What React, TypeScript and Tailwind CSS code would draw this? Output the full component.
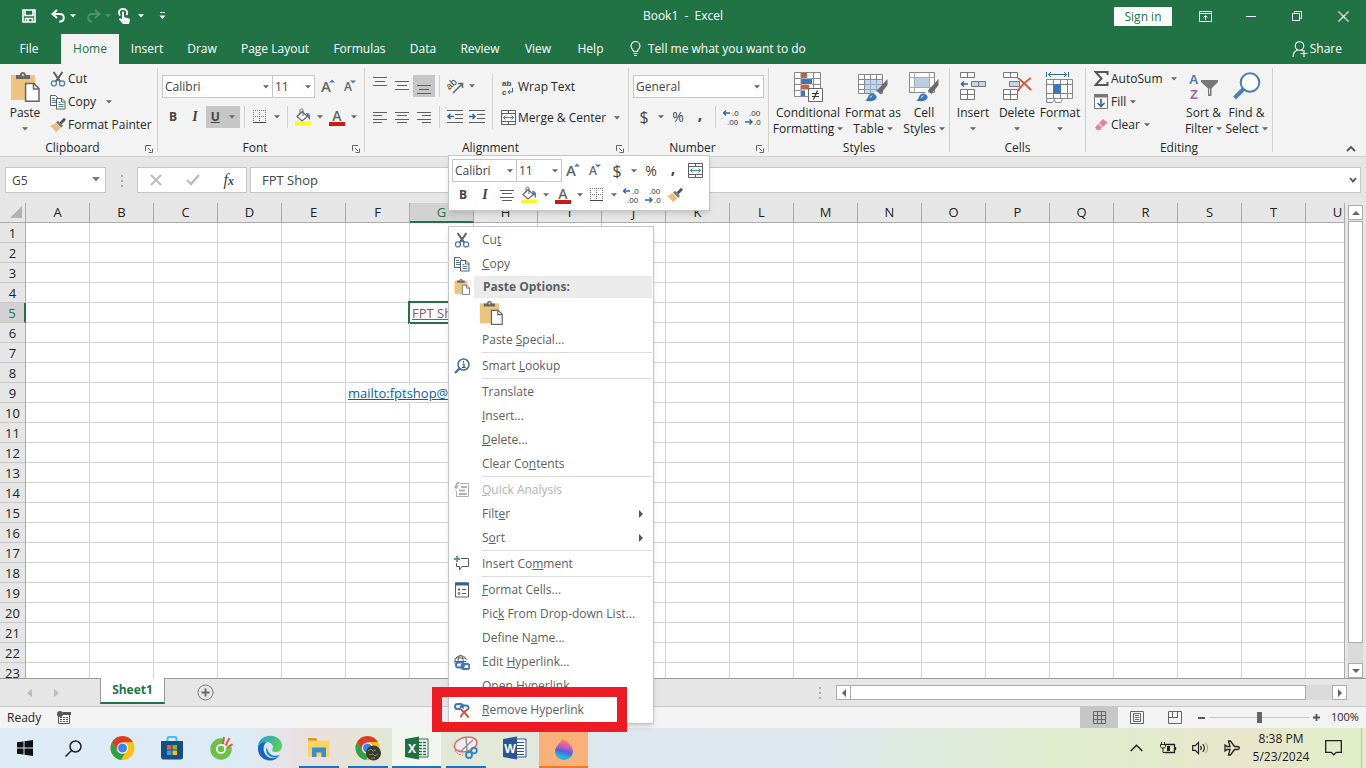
import React, { useState } from 'react';

type IconProps = { className?: string };

const tabs = [
  { name: 'File', width: 'w-[61px]' },
  { name: 'Home', width: 'w-[58px]' },
  { name: 'Insert', width: 'w-[56px]' },
  { name: 'Draw', width: 'w-[54px]' },
  { name: 'Page Layout', width: 'w-[92px]' },
  { name: 'Formulas', width: 'w-[77px]' },
  { name: 'Data', width: 'w-[50px]' },
  { name: 'Review', width: 'w-[64px]' },
  { name: 'View', width: 'w-[52px]' },
  { name: 'Help', width: 'w-[53px]' },
];

const columns = 'ABCDEFGHIJKLMNOPQRSTU'.split('');
const rows = Array.from({ length: 23 }, (_, i) => i + 1);

/* ---------- small shared icons ---------- */

const Caret = ({ className = 'text-[#666]' }: IconProps) => (
  <svg width="6" height="4" viewBox="0 0 6 4" className={`shrink-0 ${className}`} aria-hidden="true">
    <path d="M0 0.3h6L3 3.6z" fill="currentColor" />
  </svg>
);

const CaretButton = ({ label }: { label: string }) => (
  <button aria-label={label} className="flex h-[22px] w-3 shrink-0 items-center justify-center">
    <Caret />
  </button>
);

const Scissors = () => (
  <svg width="16" height="16" viewBox="0 0 16 16" fill="none" className="shrink-0" aria-hidden="true">
    <path d="M3.6 1l6.6 9.6M12.4 1L5.8 10.6" stroke="#5e5e5e" strokeWidth="2" />
    <circle cx="3.9" cy="12.4" r="2.5" stroke="#4a7fb5" strokeWidth="1.3" />
    <circle cx="12.1" cy="12.4" r="2.5" stroke="#4a7fb5" strokeWidth="1.3" />
  </svg>
);

const CopyIcon = () => (
  <svg width="16" height="16" viewBox="0 0 16 16" fill="none" className="shrink-0" aria-hidden="true">
    <path d="M.5 1.5h5l2 2v8h-7z" fill="#fff" stroke="#5e5e5e" />
    <path d="M2 4.5h3M2 6.5h4M2 8.5h4" stroke="#4a7fb5" />
    <path d="M6.5 4.5h5.5l3 3v7.500h-8.500z" fill="#fff" stroke="#5e5e5e" />
    <path d="M11.500 4.500v3.500h3.500" stroke="#5e5e5e" />
    <path d="M8.500 8.500h2M8.500 10.500h5M8.500 12.500h5" stroke="#4a7fb5" />
  </svg>
);

const PainterIcon = () => (
  <svg width="16" height="16" viewBox="0 0 16 16" className="shrink-0" aria-hidden="true">
    <path d="M0 9.500L5.500 6l5 5L6 15.500c-1-2-3-4.500-6-6z" fill="#e8bf7e" />
    <path d="M6 5.500L8 3.700l5 5-1.800 2z" fill="#777" />
    <path d="M9.600 5.200L14 .8l2 2L11.700 7.200z" fill="#555" />
  </svg>
);

const PasteIcon = ({ className = 'h-[30px] w-[30px]' }: IconProps) => (
  <svg viewBox="0 0 30 30" fill="none" className={`shrink-0 ${className}`} aria-hidden="true">
    <path d="M1 3h24v25H1z" fill="#ecc47f" />
    <path d="M6 7V3h4c0-4 6-4 6 0h4v4z" fill="#666" />
    <circle cx="13" cy="3" r="1.300" fill="#ecc47f" />
    <path d="M15.600 11.600h8.400l5 5v12.600H15.600z" fill="#fff" stroke="#666" strokeWidth="1.500" />
    <path d="M23.500 11.600v5.500H29" stroke="#666" strokeWidth="1.500" />
  </svg>
);

const GrowFont = () => (
  <span className="flex text-[15px] font-semibold leading-none text-[#666]">
    A
    <svg width="6" height="4" viewBox="0 0 6 4" className="-ml-0.5" aria-hidden="true"><path d="M0 3.500h6L3 .5z" fill="#4a7fb5" /></svg>
  </span>
);

const ShrinkFont = () => (
  <span className="flex text-xs font-semibold leading-[14px] text-[#666]">
    A
    <svg width="6" height="4" viewBox="0 0 6 4" className="-ml-0.5" aria-hidden="true"><path d="M0 .5h6L3 3.500z" fill="#4a7fb5" /></svg>
  </span>
);

const BordersIcon = () => (
  <svg width="14" height="14" viewBox="0 0 14 14" fill="none" aria-hidden="true">
    <path d="M0 .5h14M0 6.500h14M.5 0v13M6.500 0v13M12.500 0v13" stroke="#777" strokeDasharray="1 1" />
    <path d="M0 12.500h13" stroke="#444" />
  </svg>
);

const BucketIcon = () => (
  <svg width="18" height="18" viewBox="0 0 18 18" fill="none" aria-hidden="true">
    <path d="M8 3.500l5.500 5L8 13 3 8.500z" fill="#fff" stroke="#666" strokeWidth="1.200" />
    <path d="M6 6.500V2.500c0-2 3-2 3 0V8" stroke="#666" />
    <path d="M12 5c4-.5 5 3 3.500 7.500-.5-2-1-3-2.500-4z" fill="#4a7fb5" />
    <path d="M1 13.500h16v4H1z" fill="#fcf62a" />
  </svg>
);

const FontColorIcon = () => (
  <span className="flex w-4 flex-col items-center border-b-4 border-[#cf1717] text-sm font-semibold leading-[13px] text-[#666]">A</span>
);

const linePaths = {
  top: 'M0 2.500h14M2 6.500h10M0 10.500h14',
  left: 'M0 2.500h14M0 5.500h9M0 9.500h14M0 12.500h9',
  center: 'M0 2.500h14M2 5.500h10M0 9.500h14M2 12.500h10',
  right: 'M0 2.500h14M5 5.500h9M0 9.500h14M5 12.500h9',
};

const Lines = ({ kind, className = '' }: { kind: keyof typeof linePaths; className?: string }) => (
  <svg width="14" height="14" viewBox="0 0 14 14" className={className} aria-hidden="true">
    <path d={linePaths[kind]} stroke="#5e5e5e" />
  </svg>
);

const IndentIcon = ({ inc }: { inc?: boolean }) => (
  <svg width="16" height="14" viewBox="0 0 16 14" fill="none" aria-hidden="true">
    <path d="M0 .5h16M8 4.500h8M8 8.500h8M0 12.500h16" stroke="#5e5e5e" />
    <path d={inc ? 'M0 6.500h6M3.500 4l2.500 2.500L3.500 9' : 'M7 6.500H1M3.500 4L1 6.500 3.500 9'} stroke="#34679f" strokeWidth="1.600" />
  </svg>
);

const MergeIcon = () => (
  <svg width="15" height="15" viewBox="0 0 15 15" fill="none" aria-hidden="true">
    <path d="M.5.5h14v14H.5zM.5 3.500h14M.5 11.500h14M7.500.5v3M7.500 11.500v3" stroke="#5e5e5e" fill="#fff" />
    <path d="M2.500 7.500h10M4.500 5.500l-2 2 2 2M10.500 5.500l2 2-2 2" stroke="#4a7fb5" />
  </svg>
);

const DecimalIcon = ({ inc }: { inc?: boolean }) => (
  <svg width="16" height="19" viewBox="0 0 16 19" fill="none" aria-hidden="true">
    <g fill="#333" fontSize="8" fontFamily="Liberation Sans, sans-serif">
      <text x={inc ? 9 : 4} y="8">{inc ? '.0' : '.00'}</text>
      <text x={inc ? 4 : 9} y="17">{inc ? '.00' : '.0'}</text>
    </g>
    <path d={inc ? 'M7 5H1M3 2.500L.5 5 3 7.500' : 'M0 14h6.500M4.500 11.500L7 14l-2.500 2.500'} stroke="#34679f" strokeWidth="1.400" />
  </svg>
);

/* ---------- large ribbon icons ---------- */

const ConditionalIcon = () => (
  <svg width="30" height="30" viewBox="0 0 30 30" fill="none" aria-hidden="true">
    <path d="M1.500.5h26v24h-26z" fill="#fff" />
    <path d="M8 1h6v5H8zM8 12.500h8v5H8z" fill="#c7603f" />
    <path d="M8 6.500h11v5.500H8zM8 18.500h4v6H8z" fill="#3f76b5" />
    <path d="M1.500.5h26v24h-26zM1.500 6.500h6M19 6.500h8.500M1.500 12.500h6M19 12.500h8.500M1.500 18.500h6M8 .5v24M20.500.5v24" stroke="#888" />
    <path d="M15.500 16.500h14v13h-14z" fill="#fff" stroke="#666" />
    <path d="M19 21.500h7M19 24.500h7M24.500 18.500l-4 9" stroke="#333" strokeWidth="1.200" />
  </svg>
);

const Brush = () => (
  <>
    <path d="M29.500 7v6l-7 9-4-3z" fill="#6b6b6b" />
    <path d="M7 28.500c3-1 2.500-4 4.500-6 3-2.500 8 .5 7 3.500-1.500 3.500-7 4-11.500 2.500z" fill="#3f76b5" />
    <path d="M17.500 19l4.500 3-2 2.500-4-3z" fill="#fff" />
    <path d="M12 26l2-2.500" stroke="#fff" />
  </>
);

const TableStyleIcon = () => (
  <svg width="30" height="30" viewBox="0 0 30 30" fill="none" aria-hidden="true">
    <path d="M.5 2.500h24v19H.5z" fill="#fff" />
    <path d="M6.500 7.500h18v14h-18z" fill="#c5d6e8" />
    <path d="M6.500 12.500h18M6.500 17.500h18M12.500 7.500v14M18.500 7.500v14" stroke="#8fa9c4" />
    <path d="M.5 2.500h24v19H.5zM.5 7.500h24M.5 12.500h6M.5 17.500h6M6.500 2.500v19M12.500 2.500v5M18.500 2.500v5" stroke="#888" />
    <Brush />
  </svg>
);

const CellStyleIcon = () => (
  <svg width="30" height="30" viewBox="0 0 30 30" fill="none" aria-hidden="true">
    <path d="M.5.5h25v20H.5z" fill="#fff" stroke="#888" />
    <path d="M.5 5.500h25M.5 15.500h25M5.500.5v20M20.500.5v20" stroke="#aaa" />
    <path d="M6 6h14v9H6z" fill="#b9cde3" />
    <Brush />
  </svg>
);

const InsertCellsIcon = () => (
  <svg width="28" height="30" viewBox="0 0 28 30" fill="none" aria-hidden="true">
    <path d="M1.500.5h14v5h-14zM8.500.5v5M1.500 17.500h14v10h-14zM8.500 17.500v10M1.500 22.500h14" fill="#fff" stroke="#777" />
    <path d="M12.500 9.500h14v5h-14zM19.500 9.500v5" fill="#c5d6e8" stroke="#777" />
    <path d="M9 12H2.500M5 9.500L2.500 12 5 14.500" stroke="#34679f" strokeWidth="1.600" />
  </svg>
);

const DeleteCellsIcon = () => (
  <svg width="30" height="30" viewBox="0 0 30 30" fill="none" aria-hidden="true">
    <path d="M1.500.5h14v5h-14zM8.500.5v5M1.500 17.500h14v10h-14zM8.500 17.500v10M1.500 22.500h14" fill="#fff" stroke="#777" />
    <path d="M7.500 9.500h10v5h-10z" fill="#c5d6e8" stroke="#777" />
    <path d="M16 6c4 3 8 7 13 12M29 6c-5 3-10 8-13 13" stroke="#cf5b3f" strokeWidth="2" />
  </svg>
);

const FormatCellsIcon = () => (
  <svg width="30" height="32" viewBox="0 0 30 32" fill="none" aria-hidden="true">
    <path d="M1.500 0v5M23.500 0v5M3 2.500h19M6 0L3.500 2.500 6 5M19 0l2.500 2.500L19 5" stroke="#34679f" />
    <path d="M1.500 7.500h26v19h-26zM1.500 12.500h26M1.500 21.500h26M8.500 7.500v19M15.500 7.500v19M22.500 7.500v19" fill="#fff" stroke="#888" />
    <path d="M8 12h8v10H8z" fill="#3f76b5" />
    <path d="M1.500 27v3.500h6l2-3 1 3h5l2-3" fill="#fff" stroke="#888" />
  </svg>
);

const SortIcon = () => (
  <svg width="30" height="31" viewBox="0 0 30 31" aria-hidden="true">
    <g fontSize="13" fontWeight="700" fontFamily="Liberation Sans, sans-serif">
      <text x="0" y="12" fill="#4a7fb5">A</text>
      <text x="1" y="27" fill="#9b63b5">Z</text>
    </g>
    <path d="M12 8h17v2l-6.500 6.500V24h-3.500v-7.500L12 10z" fill="#777" />
    <path d="M20.500 16.500v6" stroke="#ddd" />
  </svg>
);

const FindIcon = () => (
  <svg width="30" height="30" viewBox="0 0 30 30" fill="none" aria-hidden="true">
    <circle cx="18" cy="10.500" r="9.300" fill="#fff" stroke="#4a7fb5" strokeWidth="2" />
    <path d="M11.500 17L2.500 26" stroke="#4a7fb5" strokeWidth="4" />
  </svg>
);

/* ---------- ribbon building blocks ---------- */

type GroupProps = { title: string; width: string; launcher?: boolean; children: React.ReactNode };

const Group = ({ title, width, launcher, children }: GroupProps) => (
  <>
    <section aria-label={title} className={`flex h-full shrink-0 flex-col justify-between ${width}`}>
      <div className="flex">{children}</div>
      <div className="flex h-4 items-center">
        <span className="flex-1 text-center leading-4">{title}</span>
        {launcher && (
          <button aria-label={`${title} settings`} className="flex w-3 items-center justify-start pt-0.5">
            <svg width="8" height="8" viewBox="0 0 8 8" fill="none">
              <path d="M.5 6V.5H6M3 3l3 3M7.500 3.500v4h-4" stroke="#666" />
            </svg>
          </button>
        )}
      </div>
    </section>
    <div className="my-1 w-px shrink-0 bg-[#d2d0ce]"></div>
  </>
);

const Tool = ({ label, className = '', children }: { label: string; className?: string; children: React.ReactNode }) => (
  <button aria-label={label} className={`flex h-[22px] w-[22px] shrink-0 items-center justify-center text-[#444] ${className}`}>
    {children}
  </button>
);

const Divider = ({ className = 'mx-1' }: IconProps) => <span className={`h-[22px] w-px shrink-0 bg-[#d2d0ce] ${className}`}></span>;

type PickerProps = { label: string; value: string; className: string };

const Picker = ({ label, value, className }: PickerProps) => (
  <label className={`relative block h-[23px] shrink-0 ${className}`}>
    <select aria-label={label} className="h-full w-full appearance-none border border-[#c6c6c6] bg-white pl-0.5 text-xs text-[#444] outline-none">
      <option>{value}</option>
    </select>
    <Caret className="pointer-events-none absolute right-1 top-[10px] text-[#666]" />
  </label>
);

type BigProps = { lines: string[]; width: string; icon: React.ReactNode };

const BigButton = ({ lines, width, icon }: BigProps) => (
  <button className={`flex shrink-0 flex-col items-center pt-2 ${width}`}>
    <span className="flex h-8 items-start justify-center">{icon}</span>
    <span className="mt-px h-4 whitespace-nowrap leading-4">{lines[0]}</span>
    <span className="flex h-4 items-center gap-[3px] whitespace-nowrap leading-4">
      {lines[1]}
      <Caret />
    </span>
  </button>
);

type SmallProps = { icon: React.ReactNode; text: string; arrow?: string };

const SmallButton = ({ icon, text, arrow }: SmallProps) => (
  <button className="flex h-[23px] items-center whitespace-nowrap">
    <span className="mr-0.5 flex w-4 justify-center">{icon}</span>
    {text}
    {arrow && <Caret className={`text-[#666] ${arrow}`} />}
  </button>
);

/* ---------- header ---------- */

const TitleBar = () => (
  <div className="flex h-[34px] items-start text-white">
    <div className="flex h-8 flex-1 items-center">
      <button aria-label="Save" className="ml-[22px]">
        <svg width="14" height="14" viewBox="0 0 14 14" fill="none"><path d="M1 1h12v12H1zM3 1v5.500h8V1M3.500 13V9.500h7V13M6 10v3" stroke="#fff" strokeWidth="1.600" /></svg>
      </button>
      <button aria-label="Undo" className="ml-[15px]">
        <svg width="15" height="14" viewBox="0 0 15 14" fill="none"><path d="M6 1L1.500 5 6 9M2 5h7c5 0 5 7.500 0 7.500H8" stroke="#fff" strokeWidth="2" /></svg>
      </button>
      <Caret className="ml-1 text-white" />
      <button aria-label="Redo" className="ml-2.5">
        <svg width="15" height="14" viewBox="0 0 15 14" fill="none"><path d="M9 1l4.500 4L9 9M13 5H6C1 5 1 12.500 6 12.500" stroke="#4f9270" strokeWidth="2" /></svg>
      </button>
      <Caret className="ml-1 text-[#4f9270]" />
      <button aria-label="Touch mode" className="ml-[7px]">
        <svg width="13" height="16" viewBox="0 0 13 16" fill="none">
          <path d="M2 7.500C-.5 3 2 1 5 1s5.500 2.500 3.500 6" stroke="#fff" strokeWidth="1.800" />
          <path d="M4 4.500c0-1.200 2-1.200 2 0V9l5 1.500c1 .3 1 1 .8 2L11 16H5L1.200 11.500c-.5-1 .8-1.500 1.500-1L4 11.500z" fill="#fff" />
        </svg>
      </button>
      <Caret className="ml-[7px] text-white" />
      <button aria-label="Customize toolbar" className="ml-[15px]">
        <svg width="7" height="8" viewBox="0 0 7 8"><path d="M1 .5h5" stroke="#fff" /><path d="M.5 3.500h6l-3 3.500z" fill="#fff" /></svg>
      </button>
    </div>
    <h1 className="flex h-8 items-center whitespace-pre">Book1  -  Excel</h1>
    <div className="flex h-8 flex-1 items-center justify-end">
      <button className="mr-[10px] h-[19px] w-[58px] bg-white leading-[19px] text-[#217346]">Sign in</button>
      <button aria-label="Ribbon display options" className="flex w-[46px] justify-center">
        <svg width="13" height="11" viewBox="0 0 13 11" fill="none"><path d="M.5.5h12v10H.5zM.5 2.500h12M6.500 9V4.500M4.500 6.500l2-2 2 2" stroke="#fff" /></svg>
      </button>
      <button aria-label="Minimize" className="flex w-[46px] justify-center"><span className="h-px w-[10px] bg-white"></span></button>
      <button aria-label="Restore" className="flex w-[46px] justify-center">
        <svg width="10" height="10" viewBox="0 0 10 10" fill="none"><path d="M.5 2.500h7v7h-7zM2.500 2V.5h7v7H8" stroke="#fff" /></svg>
      </button>
      <button aria-label="Close" className="flex w-[46px] justify-center">
        <svg width="11" height="11" viewBox="0 0 11 11" fill="none"><path d="M.5.5l10 10M10.500.5l-10 10" stroke="#fff" strokeWidth="1.100" /></svg>
      </button>
    </div>
  </div>
);

const TabBar = () => (
  <nav className="flex h-[30px] items-stretch text-white">
    {tabs.map((tab) => (
      <button
        key={tab.name}
        className={`shrink-0 whitespace-nowrap ${tab.width} ${tab.name === 'Home' ? 'bg-[#f3f3f3] text-[#217346]' : ''} ${tab.name === 'File' ? 'pr-[3px]' : ''}`}
      >
        {tab.name}
      </button>
    ))}
    <button className="ml-3 flex items-center gap-1.5 whitespace-nowrap">
      <svg width="13" height="16" viewBox="0 0 13 16" fill="none">
        <path d="M4.500 10.500C4.500 8.500 2 8 2 5a4.500 4.500 0 019 0c0 3-2.500 3.500-2.500 5.500zM4.500 12.500h4M5 14.500h3" stroke="#fff" strokeWidth="1.100" />
      </svg>
      Tell me what you want to do
    </button>
    <button className="ml-auto mr-6 flex items-center gap-0.5">
      <svg width="16" height="16" viewBox="0 0 16 16" fill="none">
        <circle cx="7.500" cy="5" r="4.300" stroke="#fff" strokeWidth="1.100" />
        <path d="M1 16c0-4 2-6 4.500-7M9.500 9l1.500 1M8.500 12.500h7M12 9v7" stroke="#fff" strokeWidth="1.100" />
      </svg>
      Share
    </button>
  </nav>
);

const Ribbon = () => (
  <div className="flex h-[93px] border-b border-[#d2d0ce] bg-[#f3f3f3] text-[#262626]">
    <Group title="Clipboard" width="w-[157px]" launcher>
      <BigButton lines={['Paste', '']} width="w-[50px]" icon={<PasteIcon />} />
      <div className="flex flex-col items-start pt-[3px]">
        <SmallButton icon={<Scissors />} text="Cut" />
        <SmallButton icon={<CopyIcon />} text="Copy" arrow="ml-2.5" />
        <SmallButton icon={<PainterIcon />} text="Format Painter" />
      </div>
    </Group>

    <Group title="Font" width="w-[206px]" launcher>
      <div className="pl-1 pt-[11px]">
        <div className="flex items-center">
          <Picker label="Font name" value="Calibri" className="w-[111px]" />
          <Picker label="Font size" value="11" className="-ml-px w-[43px]" />
          <Tool label="Increase font size" className="ml-0.5"><GrowFont /></Tool>
          <Tool label="Decrease font size"><ShrinkFont /></Tool>
        </div>
        <div className="mt-2 flex items-center">
          <Tool label="Bold"><b>B</b></Tool>
          <Tool label="Italic"><i className="font-['Liberation_Serif'] text-sm font-bold">I</i></Tool>
          <button aria-label="Underline" className="flex h-[22px] w-[34px] items-center justify-around bg-[#c6c6c6] font-bold text-[#444] underline">
            U
            <Caret />
          </button>
          <Divider />
          <Tool label="Borders"><BordersIcon /></Tool>
          <CaretButton label="Border options" />
          <Divider />
          <Tool label="Fill color"><BucketIcon /></Tool>
          <CaretButton label="Fill color options" />
          <Tool label="Font color"><FontColorIcon /></Tool>
          <CaretButton label="Font color options" />
        </div>
      </div>
    </Group>

    <Group title="Alignment" width="w-[263px]" launcher>
      <div className="w-[127px] pl-1 pt-[11px]">
        <div className="flex items-center">
          <Tool label="Top align" className="items-start"><Lines kind="top" /></Tool>
          <Tool label="Middle align"><Lines kind="top" /></Tool>
          <Tool label="Bottom align" className="items-end bg-[#c6c6c6]"><Lines kind="top" /></Tool>
          <Divider />
          <Tool label="Orientation">
            <svg width="18" height="18" viewBox="0 0 18 18" fill="none" className="overflow-visible">
              <text x="1" y="11" fontSize="10" fill="#444" fontFamily="Liberation Sans, sans-serif" transform="rotate(-42 5 9)">ab</text>
              <path d="M7 16l9-9M12 6.500h4.500V11" stroke="#666" strokeWidth="1.500" />
            </svg>
          </Tool>
          <CaretButton label="Orientation options" />
        </div>
        <div className="mt-[9px] flex items-center">
          <Tool label="Align left"><Lines kind="left" /></Tool>
          <Tool label="Center"><Lines kind="center" /></Tool>
          <Tool label="Align right"><Lines kind="right" /></Tool>
          <Divider />
          <Tool label="Decrease indent"><IndentIcon /></Tool>
          <Tool label="Increase indent"><IndentIcon inc /></Tool>
        </div>
      </div>
      <div className="mt-[9px] w-px bg-[#d2d0ce]"></div>
      <div className="flex flex-col items-start pl-[7px] pt-[11px]">
        <SmallButton
          icon={
            <svg width="14" height="20" viewBox="0 0 14 20" fill="none">
              <g fill="#444" fontSize="8" fontWeight="700" fontFamily="Liberation Sans, sans-serif"><text x="1" y="9">ab</text><text x="1" y="18">c</text></g>
              <path d="M11.500 11v4H7M9 13l-2 2 2 2" stroke="#34679f" />
            </svg>
          }
          text="Wrap Text"
        />
        <div className="h-2"></div>
        <SmallButton icon={<MergeIcon />} text="Merge & Center" arrow="ml-2" />
      </div>
    </Group>

    <Group title="Number" width="w-[139px]" launcher>
      <div className="pl-1 pt-[11px]">
        <Picker label="Number format" value="General" className="w-[131px]" />
        <div className="mt-2 flex items-center">
          <Tool label="Accounting format" className="text-base">$</Tool>
          <CaretButton label="Accounting options" />
          <Tool label="Percent style" className="text-sm font-medium">%</Tool>
          <Tool label="Comma style" className="pb-1.5 text-base font-bold leading-4">,</Tool>
          <Divider />
          <Tool label="Increase decimal"><DecimalIcon inc /></Tool>
          <Tool label="Decrease decimal"><DecimalIcon /></Tool>
        </div>
      </div>
    </Group>

    <Group title="Styles" width="w-[180px]">
      <BigButton lines={['Conditional', 'Formatting']} width="w-[78px]" icon={<ConditionalIcon />} />
      <BigButton lines={['Format as', 'Table']} width="w-[52px]" icon={<TableStyleIcon />} />
      <BigButton lines={['Cell', 'Styles']} width="w-[50px]" icon={<CellStyleIcon />} />
    </Group>

    <Group title="Cells" width="w-[135px]">
      <BigButton lines={['Insert', '']} width="w-[46px]" icon={<InsertCellsIcon />} />
      <BigButton lines={['Delete', '']} width="w-[42px]" icon={<DeleteCellsIcon />} />
      <BigButton lines={['Format', '']} width="w-[44px]" icon={<FormatCellsIcon />} />
    </Group>

    <Group title="Editing" width="w-[186px]">
      <div className="flex w-[96px] flex-col items-start pl-[7px] pt-[3px]">
        <SmallButton icon={<svg width="15" height="15" viewBox="0 0 15 15" fill="none"><path d="M13.500 4V1H1.500l6 6.500-6 6.500h12v-3" stroke="#555" strokeWidth="2" /></svg>} text="AutoSum" arrow="ml-2" />
        <SmallButton
          icon={<svg width="14" height="15" viewBox="0 0 14 15" fill="none"><path d="M.5.5h13v14H.5z" fill="#fff" stroke="#777" /><path d="M0 0h14v3.500H0z" fill="#777" /><path d="M7 5v7.500M3.500 9L7 12.500 10.500 9" stroke="#34679f" strokeWidth="1.700" /></svg>}
          text="Fill"
          arrow="ml-1"
        />
        <SmallButton icon={<svg width="13" height="13" viewBox="0 0 13 13"><path d="M8 1l4.500 3.500L8 9 4 5z" fill="#e8849a" /><path d="M3.200 5.800L7 9.700 5 12H2L0 9.500z" fill="#e8849a" /></svg>} text="Clear" arrow="ml-1" />
      </div>
      <BigButton lines={['Sort &', 'Filter']} width="w-[43px]" icon={<SortIcon />} />
      <BigButton lines={['Find &', 'Select']} width="w-[43px]" icon={<FindIcon />} />
    </Group>

    <button aria-label="Collapse ribbon" className="ml-auto mr-[10px] self-end pb-1">
      <svg width="10" height="7" viewBox="0 0 10 7" fill="none"><path d="M1 6l4-4 4 4" stroke="#555" strokeWidth="1.800" /></svg>
    </button>
  </div>
);

const FormulaBar = () => (
  <div className="flex h-[46px] items-start bg-[#e6e6e6] px-[5px] pt-[10px] text-[13px] text-[#444]">
    <label className="relative">
      <input aria-label="Name box" defaultValue="G5" className="h-[26px] w-[101px] border border-[#c6c6c6] bg-white pl-1.5 text-xs outline-none" />
      <svg width="8" height="5" viewBox="0 0 8 5" className="absolute right-1.5 top-[10px]"><path d="M0 0h8L4 4.500z" fill="#777" /></svg>
    </label>
    <svg width="2" height="12" viewBox="0 0 2 12" className="ml-[15px] mr-[14px] mt-2"><path d="M0 0h2v2H0zM0 5h2v2H0zM0 10h2v2H0z" fill="#aaa" /></svg>
    <div className="mr-[3px] flex h-[26px] w-[110px] items-center justify-around border border-[#c6c6c6] bg-white">
      <button aria-label="Cancel"><svg width="12" height="12" viewBox="0 0 12 12"><path d="M1 1l10 10M11 1L1 11" stroke="#bbb" strokeWidth="1.800" /></svg></button>
      <button aria-label="Enter"><svg width="14" height="12" viewBox="0 0 14 12" fill="none"><path d="M1 6l4 4 8-9" stroke="#bbb" strokeWidth="2.400" /></svg></button>
      <button aria-label="Insert function" className="font-['Liberation_Serif'] text-base italic leading-4">f<span className="text-xs font-bold">x</span></button>
    </div>
    <label className="relative flex-1">
      <input aria-label="Formula" defaultValue="FPT Shop" className="h-[26px] w-full border border-[#c6c6c6] bg-white pl-[11px] outline-none" />
      <svg width="8" height="7" viewBox="0 0 8 7" fill="none" className="absolute right-1 top-[10px]"><path d="M1 1l3 3.500L7 1" stroke="#555" strokeWidth="1.800" /></svg>
    </label>
  </div>
);

const ScrollButton = ({ label, d }: { label: string; d: string }) => (
  <button aria-label={label} className="flex h-[15px] w-[15px] shrink-0 items-center justify-center border border-[#ababab] bg-white">
    <svg width="8" height="8" viewBox="0 0 8 8"><path d={d} fill="#666" /></svg>
  </button>
);

/* ---------- worksheet ---------- */

const Sheet = () => (
  <main className="flex min-h-0 flex-1 bg-[#e6e6e6]">
    <div className="mr-[3px] min-w-0 flex-1 overflow-hidden border-r border-[#ababab] bg-white">
      <table className="w-[1370px] table-fixed border-separate border-spacing-0 text-[13px] text-[#222]">
        <thead>
          <tr className="h-5">
            <th className="w-[26px] border-b border-r border-[#ababab] bg-[#e6e6e6] p-0">
              <svg width="13" height="13" viewBox="0 0 13 13" className="ml-auto mr-0.5"><path d="M12 0v12H0z" fill="#b2b2b2" /></svg>
            </th>
            {columns.map((c) => (
              <th
                key={c}
                scope="col"
                className={`w-16 border-r p-0 font-normal leading-[17px] ${c === 'G' ? 'border-b-2 border-b-[#217346] border-r-[#ababab] bg-[#d2d2d2] text-[#217346]' : 'border-b border-[#ababab] bg-[#e6e6e6]'}`}
              >
                {c}
              </th>
            ))}
          </tr>
        </thead>
        <tbody>
          {rows.map((r) => (
            <tr key={r} className="h-5">
              <th
                scope="row"
                className={`border-b border-b-[#c6c6c6] p-0 pt-0.5 font-normal leading-[17px] ${r === 5 ? 'border-r-2 border-r-[#217346] bg-[#d2d2d2] text-[#217346]' : 'border-r border-r-[#ababab] bg-[#e6e6e6]'}`}
              >
                {r}
              </th>
              {columns.map((c) => (
                <td key={c} className="relative border-b border-r border-[#d4d4d4] p-0 pt-0.5 leading-[17px]">
                  {c === 'G' && r === 5 && (
                    <>
                      <a href="#" className="block whitespace-nowrap pl-0.5 text-[#954f72] underline">FPT Shop</a>
                      <span className="pointer-events-none absolute -inset-x-0.5 -inset-y-0.5 border-2 border-[#217346]"></span>
                    </>
                  )}
                  {c === 'F' && r === 9 && (
                    <a href="#" className="absolute left-0.5 top-0.5 z-10 whitespace-nowrap bg-white text-[#0563a1] underline">mailto:fptshop@</a>
                  )}
                </td>
              ))}
            </tr>
          ))}
        </tbody>
      </table>
    </div>
    <div className="flex w-[18px] flex-col pt-0.5">
      <ScrollButton label="Scroll up" d="M0 6h8L4 2z" />
      <div className="mt-px w-[15px] flex-1 border border-[#ababab] bg-white"></div>
      <div className="h-5 w-[15px] bg-[#dadada]"></div>
      <ScrollButton label="Scroll down" d="M0 2h8L4 6z" />
    </div>
  </main>
);

const SheetTabs = () => (
  <div className="flex h-7 border-t border-[#9b9b9b] bg-[#e6e6e6]">
    <div className="flex w-[100px] items-center gap-[22px] pl-[27px]">
      <button aria-label="Previous sheet"><svg width="5" height="8" viewBox="0 0 5 8"><path d="M5 0v8L0 4z" fill="#bbb" /></svg></button>
      <button aria-label="Next sheet"><svg width="5" height="8" viewBox="0 0 5 8"><path d="M0 0v8l5-4z" fill="#bbb" /></svg></button>
    </div>
    <button className="-mt-px h-[26px] w-[65px] border-x border-b-2 border-x-[#9b9b9b] border-b-[#217346] bg-white font-bold text-[#217346]">Sheet1</button>
    <button aria-label="New sheet" className="ml-8">
      <svg width="17" height="17" viewBox="0 0 17 17" fill="none"><circle cx="8.500" cy="8.500" r="7.500" stroke="#777" /><path d="M8.500 4.500v8M4.500 8.500h8" stroke="#666" strokeWidth="1.800" /></svg>
    </button>
    <div className="ml-auto mr-[19px] flex items-center">
      <svg width="2" height="12" viewBox="0 0 2 12" className="mr-[15px]"><path d="M0 0h2v2H0zM0 5h2v2H0zM0 10h2v2H0z" fill="#aaa" /></svg>
      <div className="flex w-[511px]">
        <ScrollButton label="Scroll left" d="M6 0v8L2 4z" />
        <div className="h-[15px] flex-1 border border-l-0 border-[#ababab] bg-white"></div>
        <div className="h-[15px] w-[26px] bg-[#dadada]"></div>
        <ScrollButton label="Scroll right" d="M2 0v8l4-4z" />
      </div>
    </div>
  </div>
);

const StatusBar = () => {
  const [zoom, setZoom] = useState(50);

  return (
    <footer className="flex h-[22px] items-center border-t border-[#c6c6c6] bg-[#f3f3f3] pl-[7px] pr-2 text-[#262626]">
      <span className="text-xs">Ready</span>
      <button aria-label="Record macro" className="ml-4">
        <svg width="14" height="13" viewBox="0 0 14 13" fill="none">
          <path d="M1.500 3.500h11v9h-11z" fill="#fff" stroke="#555" /><path d="M6 1h8v3H6z" fill="#555" /><circle cx="3" cy="3" r="3" fill="#555" />
          <path d="M3 6.500h8M3 8.500h8M3 10.500h8" stroke="#555" strokeDasharray="2 1" />
        </svg>
      </button>
      <div className="ml-auto flex h-full items-center">
        <button aria-label="Normal view" className="flex h-full w-[38px] items-center justify-center bg-[#c6c6c6]">
          <svg width="13" height="13" viewBox="0 0 13 13" fill="none"><path d="M.5.5h12v12H.5zM.5 4.500h12M.5 8.500h12M4.500.5v12M8.500.5v12" stroke="#666" /></svg>
        </button>
        <button aria-label="Page layout view" className="flex h-full w-[38px] items-center justify-center">
          <svg width="14" height="13" viewBox="0 0 14 13" fill="none"><path d="M.5.5h13v12H.5zM3.500 2.500h7v8h-7zM5 4.500h4M5 6.500h4M5 8.500h4" stroke="#666" /></svg>
        </button>
        <button aria-label="Page break view" className="flex h-full w-[38px] items-center justify-center">
          <svg width="14" height="13" viewBox="0 0 14 13" fill="none"><path d="M.5.5h13v12H.5zM4.500.5v6M9.500.5v6M.5 6.500h9" stroke="#666" /></svg>
        </button>
        <button aria-label="Zoom out" className="ml-1 mr-1"><span className="block h-0.5 w-[7px] bg-[#555]"></span></button>
        <input
          type="range"
          aria-label="Zoom"
          value={zoom}
          onChange={(e) => setZoom(Number(e.target.value))}
          className="h-[11px] w-[100px] appearance-none bg-linear-to-b from-transparent from-45% via-[#999] via-45% to-transparent to-55% [&::-webkit-slider-thumb]:h-[11px] [&::-webkit-slider-thumb]:w-[5px] [&::-webkit-slider-thumb]:appearance-none [&::-webkit-slider-thumb]:bg-[#666]"
        />
        <button aria-label="Zoom in" className="ml-1 mr-[11px]"><svg width="7" height="7" viewBox="0 0 7 7"><path d="M3.500 0v7M0 3.500h7" stroke="#555" strokeWidth="1.800" /></svg></button>
        <span className="w-[27px] text-[11px]">100%</span>
      </div>
    </footer>
  );
};

/* ---------- taskbar ---------- */

const ChromeLogo = ({ children }: { children?: React.ReactNode }) => (
  <svg width="26" height="26" viewBox="0 0 26 26">
    <circle cx="12.500" cy="13" r="12" fill="#fbc116" />
    <path d="M2.100 7A12 12 0 0122.900 7H12.500L7.300 16z" fill="#de3b2f" />
    <path d="M2.100 7l5.200 9c1.500 2.500 5 3.500 7.500 2.500L11 24.900A12 12 0 012.100 7z" fill="#2da14c" />
    <circle cx="12.500" cy="13" r="5.600" fill="#fff" />
    <circle cx="12.500" cy="13" r="4.500" fill="#3f82ee" />
    {children}
  </svg>
);

const OfficeLogo = ({ letter, color }: { letter: string; color: string }) => (
  <svg width="24" height="24" viewBox="0 0 24 24">
    <path d="M12 3h11v18H12z" fill="#fff" stroke={color} />
    {letter === 'X' ? (
      <path d="M14 6.500h3M18 6.500h3M14 9.500h3M18 9.500h3M14 12.500h3M18 12.500h3M14 15.500h3M18 15.500h3M14 18.500h3M18 18.500h3" stroke={color} strokeWidth="1.600" />
    ) : (
      <path d="M14 6.500h7M14 9.500h7M14 12.500h7M14 15.500h7M14 18.500h7" stroke={color} />
    )}
    <path d="M0 3l14-2.500v23L0 21z" fill={color} />
    <text x="7" y="16.500" textAnchor="middle" fontSize="12" fontWeight="700" fill="#fff" fontFamily="Open Sans, sans-serif">{letter}</text>
  </svg>
);

const taskbarApps = [
  {
    name: 'Start',
    icon: <svg width="16" height="16" viewBox="0 0 16 16"><path d="M0 2.300L6.500 1.400v6.100H0zM7.500 1.200L16 0v7.500H7.500zM0 8.500h6.500v6.100L0 13.700zM7.500 8.500H16V16l-8.500-1.200z" fill="#111" /></svg>,
  },
  {
    name: 'Search',
    icon: <svg width="17" height="17" viewBox="0 0 17 17" fill="none"><circle cx="10.500" cy="6.500" r="5.500" stroke="#222" strokeWidth="1.500" /><path d="M6.500 10.500L.5 16.500" stroke="#222" strokeWidth="1.500" /></svg>,
  },
  { name: 'Chrome', icon: <ChromeLogo /> },
  {
    name: 'Store',
    icon: (
      <svg width="24" height="24" viewBox="0 0 24 24" fill="none">
        <path d="M7.500 5V2.500a1.500 1.500 0 011.500-1.500h6a1.500 1.500 0 011.500 1.500V5" stroke="#3cc0ec" strokeWidth="2" />
        <path d="M1 5h22v16a2.500 2.500 0 01-2.500 2.500h-17A2.500 2.500 0 011 21z" fill="#174d85" />
        <path d="M7 9h4.500v4.500H7z" fill="#ef5a36" /><path d="M12.500 9H17v4.500h-4.500z" fill="#82bb1c" />
        <path d="M7 14.500h4.500V19H7z" fill="#27a6e8" /><path d="M12.500 14.500H17V19h-4.500z" fill="#fdbb1d" />
      </svg>
    ),
  },
  {
    name: 'Coc Coc',
    icon: (
      <svg width="24" height="24" viewBox="0 0 24 24" fill="none">
        <circle cx="12" cy="13" r="7.500" stroke="#6fc04a" strokeWidth="6.500" />
        <circle cx="12" cy="13" r="5" fill="#fff" />
        <circle cx="12" cy="13" r="3.300" fill="#6fc04a" />
        <path d="M13.500 9.500L17 0l7 3v7l-7 1.500z" fill="#e2eef2" />
        <path d="M14 8L15 1M16.500 9.500l4-7.500M18.500 11.500l5-3.500" stroke="#e0533f" strokeWidth="1.800" />
      </svg>
    ),
  },
  {
    name: 'Edge',
    icon: (
      <svg width="26" height="26" viewBox="0 0 26 26">
        <defs>
          <linearGradient id="edgeTop" x1="0" y1="0" x2="1" y2="0.400"><stop offset="0" stopColor="#1f9de0" /><stop offset="1" stopColor="#56cf5d" /></linearGradient>
        </defs>
        <path d="M1 14C0 6 6 .8 13.500.8 21 .8 25 6 25 11c0 4-3 6-6.500 6-3 0-4-1.500-3-3 2-4-2-7-6-7-4 0-7.500 3-8.500 7z" fill="url(#edgeTop)" />
        <path d="M1 14C1 9.500 5 6.500 10 7c-4 2-5.500 10 1 15 4 2 8 1.500 11.500-1.500C20 24 16.500 25.500 13 25.500 6 25.500 1 20 1 14z" fill="#1466bd" />
        <path d="M9.800 12c-2 5 1 10 6.700 10.500 3 .2 5-.8 6.500-2.500-7 2.500-12-1-13.200-8z" fill="#1b86cf" />
      </svg>
    ),
  },
  {
    name: 'File Explorer',
    state: 'running',
    icon: (
      <svg width="24" height="22" viewBox="0 0 24 22">
        <path d="M1 1h8l2 3H1z" fill="#d9971d" /><path d="M1 3.500h21.500v16H1z" fill="#f9d364" />
        <path d="M5 20v-8.500a1 1 0 011-1h12a1 1 0 011 1V20h-4.500v-4.500h-5V20z" fill="#3c8ecb" />
      </svg>
    ),
  },
  {
    name: 'Chrome profile',
    state: 'running',
    icon: (
      <ChromeLogo>
        <circle cx="18.500" cy="18" r="7.500" fill="#3a3b2d" />
        <path d="M13 16l3-2 2 2 3-1M14 20l4-1 2 2 3-2M16 23h4" stroke="#8c8f78" fill="none" />
      </ChromeLogo>
    ),
  },
  { name: 'Excel', state: 'active', icon: <OfficeLogo letter="X" color="#1f7244" /> },
  {
    name: 'Snipping Tool',
    state: 'running',
    icon: (
      <svg width="26" height="26" viewBox="0 0 26 26" fill="none">
        <ellipse cx="12.500" cy="9.500" rx="11.500" ry="7" fill="#f2eeee" stroke="#dc6b6b" strokeWidth="1.600" transform="rotate(-14 12 9)" />
        <path d="M13 2l1 14M20 5L8 16" stroke="#8b96a0" strokeWidth="1.500" />
        <circle cx="16" cy="20" r="3" stroke="#2f85c4" strokeWidth="1.800" />
        <circle cx="21" cy="15.500" r="2.800" stroke="#2f85c4" strokeWidth="1.800" />
        <path d="M2 15c1 3 4 5 8 5" stroke="#dc6b6b" strokeDasharray="2 1" />
      </svg>
    ),
  },
  { name: 'Word', icon: <OfficeLogo letter="W" color="#2a5699" /> },
  {
    name: 'Paint 3D',
    state: 'attention',
    icon: (
      <svg width="20" height="26" viewBox="0 0 20 26">
        <defs>
          <linearGradient id="drop" x1="0.600" y1="0" x2="0.400" y2="1">
            <stop offset="0.100" stopColor="#fbc21c" /><stop offset="0.250" stopColor="#f0728a" /><stop offset="0.450" stopColor="#c45ec0" /><stop offset="0.650" stopColor="#5560d8" /><stop offset="0.850" stopColor="#1fb4e4" />
          </linearGradient>
        </defs>
        <path d="M9 1c1.500 4 10 9 10 15.500A9 9 0 0110 25a9 9 0 01-9-8.500C1 10 9 7 9 1z" fill="url(#drop)" />
      </svg>
    ),
  },
];

const Taskbar = () => (
  <nav
    aria-label="Taskbar"
    className="flex h-10 shrink-0 items-stretch bg-linear-[90deg,#dcebf5_0%,#dcebf5_18%,#ecdedd_23%,#dfe8d3_29%,#e4e8da_38%,#dde7f0_44%,#dde9ee_60%,#e0eccb_78%,#e8e6cb_92%,#dfeec9_100%] text-[#1a1a1a]"
  >
    {taskbarApps.map((app) => (
      <button
        key={app.name}
        aria-label={app.name}
        className={`relative flex w-[49px] shrink-0 items-center justify-center ${app.state === 'active' ? 'bg-white/60' : ''} ${app.state === 'attention' ? 'bg-[#f9b17c]' : ''}`}
      >
        {app.icon}
        {app.state === 'running' && <span className="absolute bottom-0 left-[5px] h-0.5 w-10 bg-[#1a73c1]"></span>}
        {app.state === 'active' && <span className="absolute inset-x-0 bottom-0 h-0.5 bg-[#1a73c1]"></span>}
        {app.state === 'attention' && <span className="absolute inset-x-0 bottom-0 h-0.5 bg-[#f47b20]"></span>}
      </button>
    ))}
    <div className="ml-auto flex items-center">
      <button aria-label="Show hidden icons" className="flex w-8 justify-center">
        <svg width="13" height="8" viewBox="0 0 13 8" fill="none"><path d="M.7 7l5.800-5.800L12.300 7" stroke="#222" strokeWidth="1.500" /></svg>
      </button>
      <button aria-label="Battery" className="flex w-8 justify-center">
        <svg width="17" height="12" viewBox="0 0 17 12" fill="none">
          <path d="M5.500 2.500h9v8h-9M15.500 5v3" stroke="#222" strokeWidth="1.300" /><path d="M7 4h3v5H7z" fill="#222" />
          <path d="M1.500 0v2.500M4.500 0v2.500M.5 2.500h5v2c0 1-1 1.500-2.500 1.500S.5 5.500.5 4.500zM3 6v4.500h3" stroke="#222" />
        </svg>
      </button>
      <button aria-label="Volume" className="flex w-8 justify-center">
        <svg width="17" height="14" viewBox="0 0 17 14" fill="none">
          <path d="M.7 4.700h2.500L6.500 1.500v11L3.200 9.300H.7z" stroke="#222" strokeWidth="1.200" />
          <path d="M8.500 5c1 1.200 1 2.800 0 4M10.800 3c2 2.500 2 5.500 0 8" stroke="#222" strokeWidth="1.200" /><path d="M13.300 1.500c3 3 3 8 0 11" stroke="#999" />
        </svg>
      </button>
      <button aria-label="Airplane mode" className="flex w-8 justify-center">
        <svg width="16" height="16" viewBox="0 0 16 16" fill="none"><path d="M1 5l2 1.500h3L4.500 1H6.500l4 5.500H13c3 0 3 3 0 3h-2.500l-4 5.500h-2L6 9.500H3L1 11V5z" stroke="#222" strokeWidth="1.300" /></svg>
      </button>
      <div className="w-[66px] text-center leading-[18px]">
        <div>8:38 PM</div>
        <div>5/23/2024</div>
      </div>
      <button aria-label="Notifications" className="flex w-[38px] justify-center">
        <svg width="17" height="16" viewBox="0 0 17 16" fill="none"><path d="M.7.7h15.600v11.600h-5l-2.500 2.500-2.500-2.500H.7z" stroke="#222" strokeWidth="1.300" /></svg>
      </button>
      <span className="ml-[9px] mr-1 h-10 w-px bg-[#b9c4a6]"></span>
    </div>
  </nav>
);

/* ---------- floating menus ---------- */

const MiniToolbar = () => (
  <div role="toolbar" aria-label="Mini toolbar" className="absolute left-[448px] top-[155px] z-20 w-[262px] border border-[#c6c6c6] bg-white pb-1 pl-[3px] pt-[3px] shadow-md">
    <div className="flex items-center">
      <Picker label="Mini font name" value="Calibri" className="w-[65px]" />
      <Picker label="Mini font size" value="11" className="-ml-px w-[46px]" />
      <Tool label="Increase font size"><GrowFont /></Tool>
      <Tool label="Decrease font size"><ShrinkFont /></Tool>
      <Tool label="Accounting format" className="text-base">$</Tool>
      <CaretButton label="Accounting options" />
      <Tool label="Percent style" className="text-sm font-medium">%</Tool>
      <Tool label="Comma style" className="pb-1.5 text-base font-bold leading-4">,</Tool>
      <Tool label="Merge and center"><MergeIcon /></Tool>
    </div>
    <div className="mt-0.5 flex items-center">
      <Tool label="Bold"><b>B</b></Tool>
      <Tool label="Italic"><i className="font-['Liberation_Serif'] text-sm font-bold">I</i></Tool>
      <Tool label="Center"><Lines kind="center" /></Tool>
      <Tool label="Fill color"><BucketIcon /></Tool>
      <CaretButton label="Fill color options" />
      <Tool label="Font color"><FontColorIcon /></Tool>
      <CaretButton label="Font color options" />
      <Tool label="Borders"><BordersIcon /></Tool>
      <CaretButton label="Border options" />
      <Tool label="Increase decimal"><DecimalIcon inc /></Tool>
      <Tool label="Decrease decimal"><DecimalIcon /></Tool>
      <Tool label="Format painter"><PainterIcon /></Tool>
    </div>
  </div>
);

const ChainLinks = () => (
  <g stroke="#3f76b5" strokeWidth="2" fill="none">
    <rect x="1" y="1" width="8" height="5" rx="2.500" />
    <rect x="6.500" y="2.500" width="8" height="5" rx="2.500" />
  </g>
);

type MenuItemProps = {
  before?: string;
  accel: string;
  after?: string;
  icon?: React.ReactNode;
  disabled?: boolean;
  submenu?: boolean;
};

// the accelerator letter is the underlined one
const MenuItem = ({ before = '', accel, after = '', icon, disabled, submenu }: MenuItemProps) => (
  <button role="menuitem" disabled={disabled} className={`flex h-6 w-full items-center whitespace-nowrap text-left ${disabled ? 'text-[#b1b1b1]' : 'text-[#5e5e5e]'}`}>
    <span className="flex w-[33px] shrink-0 pl-[5px]">{icon}</span>
    <span className="flex-1">
      {before}
      <span className="underline">{accel}</span>
      {after}
    </span>
    {submenu && <svg width="5" height="8" viewBox="0 0 5 8" className="mr-[9px]"><path d="M0 0v8l4-4z" fill="#555" /></svg>}
  </button>
);

const MenuLine = () => <div role="separator" className="mb-px ml-[33px] mr-px h-px bg-[#dcdcdc]"></div>;

const ContextMenu = () => (
  <div role="menu" className="absolute left-[448px] top-[226px] z-20 w-[206px] border border-[#c6c6c6] bg-white py-px shadow-md">
    <MenuItem before="Cu" accel="t" icon={<Scissors />} />
    <MenuItem accel="C" after="opy" icon={<CopyIcon />} />
    <div className="flex h-[22px] items-center">
      <span className="w-[25px] shrink-0 pl-[5px]"><PasteIcon className="h-4 w-4" /></span>
      <span className="mr-px flex-1 bg-[#ebebeb] pl-[9px] font-bold leading-[22px] text-[#5e5e5e]">Paste Options:</span>
    </div>
    <div className="flex h-[30px] items-center pl-[30px]">
      <button role="menuitem" aria-label="Paste"><PasteIcon className="h-6 w-6" /></button>
    </div>
    <MenuItem before="Paste " accel="S" after="pecial..." />
    <MenuLine />
    <MenuItem
      before="Smart "
      accel="L"
      after="ookup"
      icon={<svg width="16" height="16" viewBox="0 0 16 16" fill="none"><circle cx="9.500" cy="6.500" r="5.500" stroke="#3f70a8" strokeWidth="1.600" /><path d="M5.500 10.500L1 15" stroke="#3f70a8" strokeWidth="2.400" /><path d="M9.500 3v1.500M8.500 6h1.500v3M8 9.500h3.500" stroke="#444" strokeWidth="1.200" /></svg>}
    />
    <MenuLine />
    <MenuItem accel="" after="Translate" />
    <MenuItem accel="I" after="nsert..." />
    <MenuItem accel="D" after="elete..." />
    <MenuItem before="Clear Co" accel="n" after="tents" />
    <MenuLine />
    <MenuItem
      accel="Q"
      after="uick Analysis"
      disabled
      icon={<svg width="16" height="16" viewBox="0 0 16 16" fill="none"><path d="M6 1.500h8.500v13h-12V9" stroke="#b1b1b1" /><path d="M3 0L0 6h2L0 10l5-6H3l3-4z" fill="#b1b1b1" /><path d="M7 5h6M5 8.500h6M5 12h8" stroke="#b1b1b1" strokeWidth="2" /></svg>}
    />
    <MenuItem before="Filt" accel="e" after="r" submenu />
    <MenuItem before="S" accel="o" after="rt" submenu />
    <MenuLine />
    <MenuItem
      before="Insert Co"
      accel="m"
      after="ment"
      icon={<svg width="16" height="16" viewBox="0 0 16 16" fill="none"><path d="M7 2.500h7.500v8H8L5.500 14v-3.500h-3V7" stroke="#5e5e5e" /><path d="M3 0v6M0 3h6" stroke="#4b9f86" strokeWidth="1.800" /></svg>}
    />
    <MenuLine />
    <MenuItem
      accel="F"
      after="ormat Cells..."
      icon={<svg width="16" height="16" viewBox="0 0 16 16" fill="none"><path d="M1.500 1h13v14h-13z" stroke="#5e5e5e" fill="#fff" /><path d="M1 .5h14v3H1z" fill="#2f6394" /><path d="M8 7.500h4M8 11.500h4" stroke="#5e5e5e" /><path d="M4 6.500h2v2H4z" fill="#5e5e5e" /><circle cx="5" cy="11.500" r="1" stroke="#5e5e5e" /></svg>}
    />
    <MenuItem before="Pic" accel="k" after=" From Drop-down List..." />
    <MenuItem before="Define N" accel="a" after="me..." />
    <MenuItem
      before="Edit "
      accel="H"
      after="yperlink..."
      icon={<svg width="16" height="16" viewBox="0 0 16 16" fill="none"><path d="M1 9.500A5.800 5.800 0 1112.500 6M.8 7.500H12M1.800 4h9.500M6.500 1C3.500 3 4 7 4.500 8.500M6.500 1c2 1.500 2.700 4 2.700 7" stroke="#5e5e5e" /><path d="M2 8h14v8H2z" fill="#fff" /><g transform="translate(1 7.500)"><ChainLinks /></g></svg>}
    />
    <MenuItem accel="O" after="pen Hyperlink" />
    <MenuItem
      accel="R"
      after="emove Hyperlink"
      icon={<svg width="16" height="16" viewBox="0 0 16 16" fill="none"><g transform="translate(0 1)"><ChainLinks /></g><path d="M6.500 7c3 2 5.500 4.500 8 8.500M14 7c-3 2-6 5-7.500 8.500" stroke="#fff" strokeWidth="3.500" /><path d="M6.500 7c3 2 5.500 4.500 8 8.500M14 7c-3 2-6 5-7.500 8.500" stroke="#c9512f" strokeWidth="1.900" /></svg>}
    />
    {/* red frame around the last entry */}
    <div className="pointer-events-none absolute -bottom-[9px] -left-[17px] h-[45px] w-[195px] border-[10px] border-[#ed1c24]"></div>
  </div>
);

const App: React.FC = () => {
  return (
    <div className="relative flex h-screen flex-col overflow-hidden bg-[#e6e6e6] font-['Open_Sans',sans-serif] text-xs">
      <header className="shrink-0 bg-[#217346]">
        <TitleBar />
        <TabBar />
      </header>
      <Ribbon />
      <FormulaBar />
      <Sheet />
      <SheetTabs />
      <StatusBar />
      <Taskbar />
      <MiniToolbar />
      <ContextMenu />
    </div>
  );
};

export default App;
